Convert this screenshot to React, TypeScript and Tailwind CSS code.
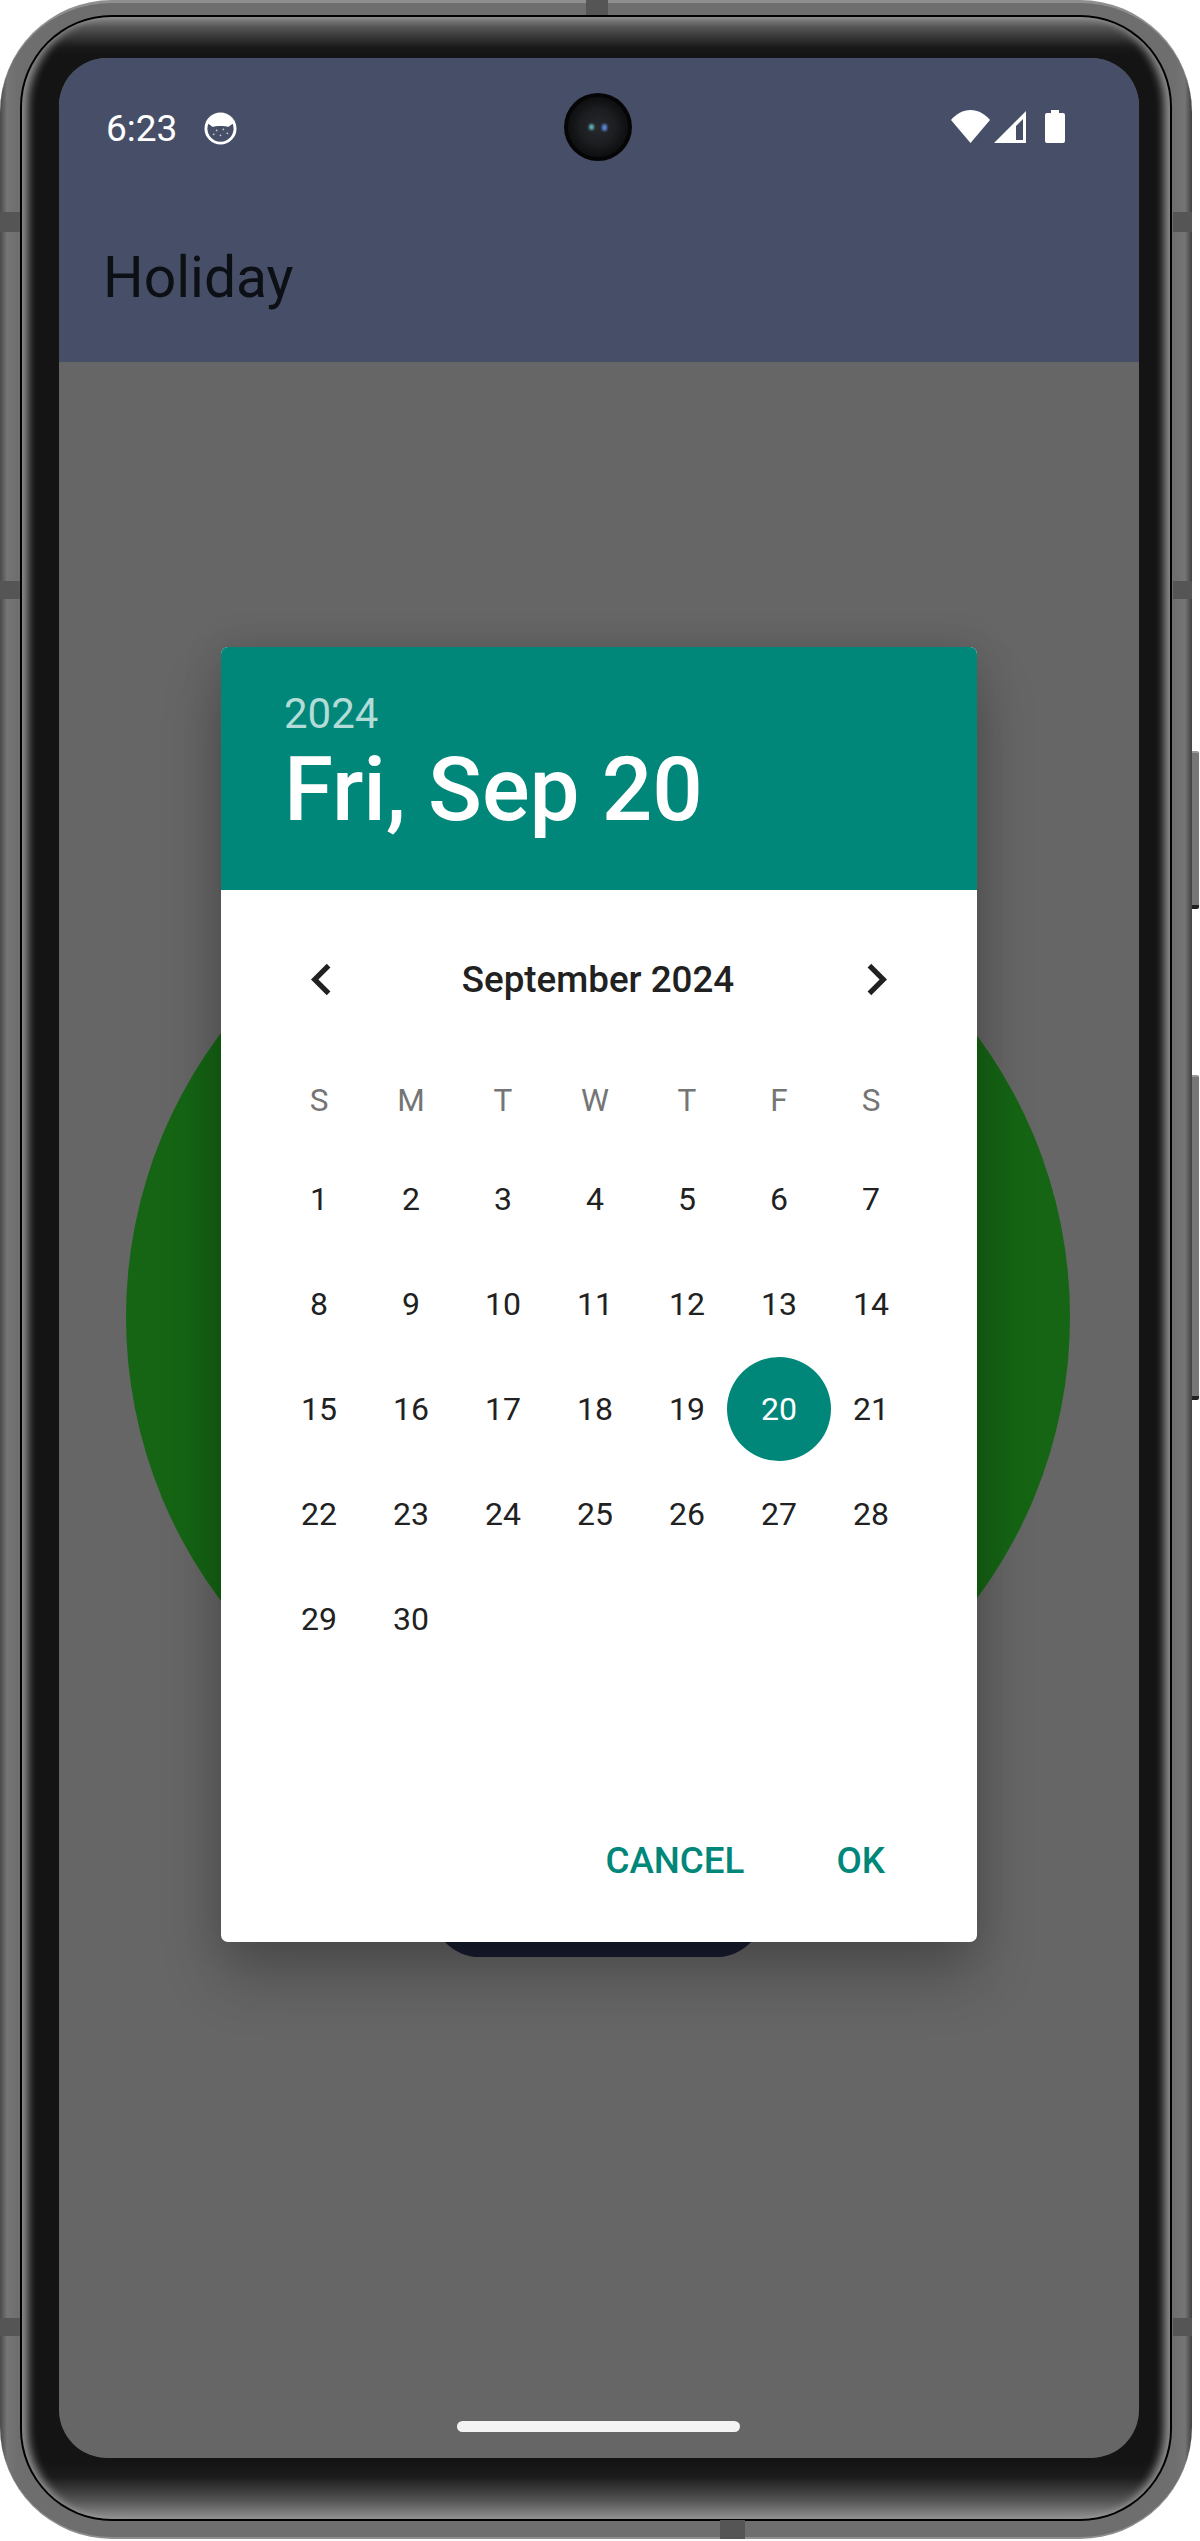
const days: (number | null)[][] = [
  [1, 2, 3, 4, 5, 6, 7],
  [8, 9, 10, 11, 12, 13, 14],
  [15, 16, 17, 18, 19, 20, 21],
  [22, 23, 24, 25, 26, 27, 28],
  [29, 30, null, null, null, null, null],
];
const heads = ["S", "M", "T", "W", "T", "F", "S"];

function Cookie() {
  return (
    <svg width="33" height="33" viewBox="0 0 34 34">
      <circle cx="17" cy="17" r="16.5" fill="#fff" />
      <path d="M4.5 12 L9 15.5 C12 14 22 14 25 15.5 L29.5 12 A13.5 13.5 0 1 1 4.5 12z" fill="#474f68" />
      <g fill="#c8ccd6">
        <circle cx="13" cy="19" r="0.9" />
        <circle cx="20" cy="18" r="0.9" />
        <circle cx="17" cy="24" r="0.9" />
        <circle cx="24" cy="22" r="0.9" />
        <circle cx="10" cy="23" r="0.9" />
      </g>
    </svg>
  );
}

function StatusIcons() {
  return (
    <div className="flex items-center -mt-[3px]">
      <svg width="39" height="33" viewBox="0 0 39 33"><path d="M19.5 33 0 10C5 4 12 0 19.5 0S34 4 39 10z" fill="#fff" /></svg>
      <svg width="32" height="32" viewBox="0 0 32 32" className="ml-[4px]"><path fillRule="evenodd" d="M32 0v32H0zM29 8 22 15v14h7z" fill="#fff" /></svg>
      <svg width="20" height="33" viewBox="0 0 20 33" className="ml-[19px]"><path d="M6 0h8v3h4a2 2 0 0 1 2 2v26a2 2 0 0 1-2 2H2a2 2 0 0 1-2-2V5a2 2 0 0 1 2-2h4z" fill="#fff" /></svg>
    </div>
  );
}

function Chevron({ right }: { right?: boolean }) {
  return (
    <svg width="63" height="63" viewBox="0 0 24 24" fill="#212121">
      <path d={right ? "M8.59 16.59 10 18l6-6-6-6-1.41 1.41L13.17 12z" : "M15.41 7.41 14 6l-6 6 6 6 1.41-1.41L10.83 12z"} />
    </svg>
  );
}

export default function App() {
  return (
    <div className="w-[1200px] h-[2541px] bg-white relative overflow-hidden font-['Roboto',sans-serif]">
      {/* side buttons */}
      <div className="absolute left-[1190px] top-[751px] w-[9px] h-[158px] bg-[#777] border-t-2 border-b-4 border-t-[#999] border-b-[#222] rounded-r-[2px]" />
      <div className="absolute left-[1190px] top-[1075px] w-[9px] h-[325px] bg-[#777] border-t-2 border-b-4 border-t-[#999] border-b-[#222] rounded-r-[2px]" />

      {/* metal frame */}
      <div className="absolute left-0 top-0 w-[1192px] h-[2539px] rounded-[112px] bg-[linear-gradient(90deg,#4a4a4a_0px,#757575_7px,#6e6e6e_18px,#6e6e6e_1174px,#757575_1185px,#404040_1192px)] border-t-[3px] border-b-[2px] border-[#8f8f8f] pt-[12px] pb-[16px] px-[20px]">
        <div className="w-full h-full rounded-[92px] bg-black p-[2px]">
          <div className="w-full h-full rounded-[90px] bg-[linear-gradient(180deg,#8a8a8a_0px,#555_10px,#1a1a1a_30px,#141414_38px,#141414_2444px,#1c1c1c_2460px,#555_2484px,#8c8c8c_2500px)] shadow-[inset_11px_0_9px_-5px_rgba(165,165,165,0.85),inset_-11px_0_9px_-5px_rgba(165,165,165,0.85)]" />
        </div>
      </div>
      {/* antenna bands */}
      <div className="absolute left-0 top-[212px] w-[20px] h-[20px] bg-[#555]" />
      <div className="absolute left-0 top-[581px] w-[20px] h-[18px] bg-[#555]" />
      <div className="absolute left-0 top-[2318px] w-[20px] h-[18px] bg-[#555]" />
      <div className="absolute left-[1173px] top-[212px] w-[19px] h-[20px] bg-[#555]" />
      <div className="absolute left-[1173px] top-[581px] w-[19px] h-[18px] bg-[#555]" />
      <div className="absolute left-[1173px] top-[2318px] w-[19px] h-[18px] bg-[#555]" />
      <div className="absolute left-[586px] top-0 w-[22px] h-[15px] bg-[#555]" />
      <div className="absolute left-[720px] top-[2520px] w-[25px] h-[19px] bg-[#555]" />

      {/* screen */}
      <div className="absolute left-[59px] top-[58px] w-[1080px] h-[2400px] rounded-[48px] overflow-hidden bg-[#666666] flex flex-col">
        <div className="h-[304px] bg-[#474f68] shrink-0 flex flex-col">
          <div className="h-[138px] flex items-center justify-between pl-[47px] pr-[74px] pt-[2px]">
            <div className="flex items-center gap-[27px] text-white text-[37px] leading-none">
              <span>6:23</span>
              <Cookie />
            </div>
            <StatusIcons />
          </div>
          <div className="pl-[44px] text-[57px] leading-[66px] text-[#0c0f14] mt-[49px]">Holiday</div>
        </div>
        <div className="relative flex-1">
          <div className="absolute left-[67px] top-[483px] w-[944px] h-[944px] rounded-full bg-[#156514]" />
          <div className="absolute left-[373px] top-[1500px] w-[332px] h-[95px] rounded-[54px] bg-[#181d30]" />
        </div>
        {/* camera */}
        <div className="absolute left-[505px] top-[35px] w-[68px] h-[68px] rounded-full bg-[#050505] flex items-center justify-center">
          <div className="w-[60px] h-[60px] rounded-full bg-[radial-gradient(circle,#26282c_0px,#1c1d20_18px,#141517_24px,#0e0f10_30px)] flex items-center justify-center gap-[8px]">
            <div className="w-[5px] h-[6px] rounded-full bg-[#5fb5b5] blur-[1px]" />
            <div className="w-[5px] h-[7px] rounded-full bg-[#5a86d8] blur-[1px]" />
          </div>
        </div>
      </div>

      {/* dialog */}
      <div className="absolute left-[221px] top-[647px] w-[756px] h-[1295px] rounded-[7px] bg-white overflow-hidden flex flex-col shadow-[0_36px_60px_rgba(0,0,0,0.24),0_0_40px_rgba(0,0,0,0.12)]">
        <div className="h-[243px] bg-[#00877a] pl-[63px] pt-[42px] shrink-0">
          <div className="text-[42px] leading-[49px] text-[#b3dbd7]">2024</div>
          <div className="text-[89px] leading-[104px] font-medium text-white">Fri, Sep 20</div>
        </div>
        <div className="flex-1 flex flex-col">
          <div className="flex items-center justify-between px-[69px] h-[63px] mt-[58px]">
            <Chevron />
            <span className="text-[36.75px] font-medium text-[#212121] -ml-[2px]">September 2024</span>
            <Chevron right />
          </div>
          <div className="grid grid-cols-7 w-[644px] ml-[52px] mt-[44px]">
            {heads.map((h, i) => (
              <div key={i} className="h-[92px] flex items-center justify-center text-[31.5px] text-[#757575]">{h}</div>
            ))}
            {days.flat().map((d, i) => (
              <div key={i} className="h-[104.8px] flex items-center justify-center">
                {d !== null && (
                  <div className={`w-[104px] h-[104px] shrink-0 rounded-full flex items-center justify-center text-[32px] ${d === 20 ? "bg-[#00877a] text-white" : "text-[#212121]"}`}>{d}</div>
                )}
              </div>
            ))}
          </div>
          <div className="mt-auto mb-[62px] flex justify-end gap-[92px] pr-[92px] text-[36.75px] font-medium text-[#00877a] leading-none">
            <span>CANCEL</span>
            <span>OK</span>
          </div>
        </div>
      </div>

      {/* gesture bar */}
      <div className="absolute left-[457px] top-[2421px] w-[283px] h-[11px] rounded-full bg-[#f3f3f3]" />
    </div>
  );
}
